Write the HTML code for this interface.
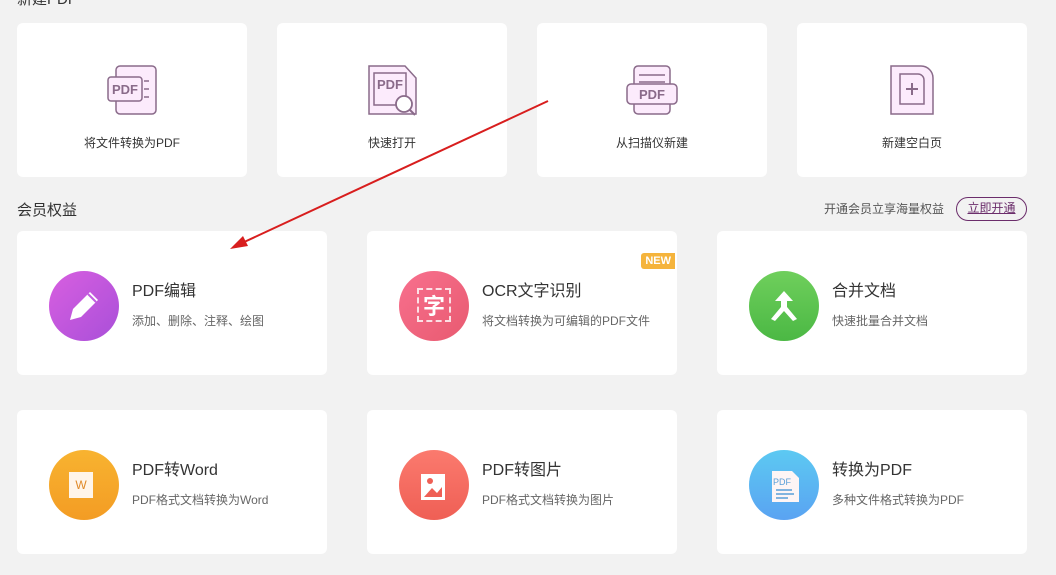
<!DOCTYPE html>
<html><head><meta charset="utf-8"><style>
*{margin:0;padding:0;box-sizing:border-box}
body{width:1056px;height:575px;background:#f2f2f2;font-family:"Liberation Sans","Noto Sans CJK SC",sans-serif;position:relative;overflow:hidden;color:#333}
.a{position:absolute}
.card{position:absolute;background:#fff;border-radius:6px}
.tc{text-align:center;font-size:12px;color:#333;position:absolute;left:0;right:0;top:111px}
.ic{position:absolute;left:50%;top:41px;margin-left:-26px}
.fc .c{position:absolute;left:32px;top:40px;width:70px;height:70px;border-radius:50%}
.fc .t{position:absolute;left:115px;top:46px;font-size:16px;color:#333}
.fc .s{position:absolute;left:115px;top:81px;font-size:12px;color:#666}
</style></head><body>
<div class="a" style="left:17px;top:-12px;font-size:15px;color:#333">新建PDF</div>

<div class="card" style="left:17px;top:23px;width:230px;height:154px">
<svg class="ic" width="52" height="52" viewBox="0 0 52 52"><rect x="10" y="2" width="40" height="48" rx="4" fill="#fcebfc" stroke="#8a6b8a" stroke-width="1.5"/><rect x="2" y="13" width="34" height="24" rx="3" fill="#fcebfc" stroke="#8a6b8a" stroke-width="1.5"/><text x="19" y="30" font-size="13" font-weight="bold" fill="#8a6b8a" text-anchor="middle" font-family="Liberation Sans">PDF</text><path d="M38 17h5M38 25h5M38 33h5" stroke="#8a6b8a" stroke-width="1.5"/></svg>
<div class="tc">将文件转换为PDF</div></div>

<div class="card" style="left:277px;top:23px;width:230px;height:154px">
<svg class="ic" width="52" height="52" viewBox="0 0 52 52"><path d="M3 2h36l11 12v36H3z" fill="#fcebfc" stroke="#8a6b8a" stroke-width="1.5"/><rect x="8" y="9" width="32" height="32" fill="none" stroke="#8a6b8a" stroke-width="1.5"/><text x="24" y="25" font-size="13" font-weight="bold" fill="#8a6b8a" text-anchor="middle" font-family="Liberation Sans">PDF</text><circle cx="38" cy="40" r="8" fill="#fff" stroke="#8a6b8a" stroke-width="1.8"/><path d="M44 46l5 5" stroke="#8a6b8a" stroke-width="2"/></svg>
<div class="tc">快速打开</div></div>

<div class="card" style="left:537px;top:23px;width:230px;height:154px">
<svg class="ic" width="52" height="52" viewBox="0 0 52 52"><rect x="8" y="2" width="36" height="48" rx="4" fill="#fcebfc" stroke="#8a6b8a" stroke-width="1.5"/><path d="M13 11h26M13 18h26" stroke="#8a6b8a" stroke-width="1.5"/><rect x="1" y="20" width="50" height="20" rx="4" fill="#fcebfc" stroke="#8a6b8a" stroke-width="1.5"/><text x="26" y="35" font-size="13" font-weight="bold" fill="#8a6b8a" text-anchor="middle" font-family="Liberation Sans">PDF</text></svg>
<div class="tc">从扫描仪新建</div></div>

<div class="card" style="left:797px;top:23px;width:230px;height:154px">
<svg class="ic" width="52" height="52" viewBox="0 0 52 52"><path d="M5 2h30a12 12 0 0 1 12 12v36H5z" fill="#fcebfc" stroke="#8a6b8a" stroke-width="1.5"/><path d="M14 10h18a6 6 0 0 1 6 6v24H14z" fill="none" stroke="#8a6b8a" stroke-width="1.5"/><path d="M26 19v12M20 25h12" stroke="#8a6b8a" stroke-width="2"/></svg>
<div class="tc">新建空白页</div></div>

<div class="a" style="left:17px;top:199px;font-size:15px;color:#333">会员权益</div>
<div class="a" style="left:824px;top:200px;font-size:12px;color:#555">开通会员立享海量权益</div>
<div class="a" style="left:956px;top:197px;width:71px;height:24px;border:1.5px solid #6b2d6b;border-radius:12px;font-size:12px;color:#6b2d6b;text-align:center;line-height:21px;text-decoration:underline">立即开通</div>

<div class="card fc" style="left:17px;top:231px;width:310px;height:144px">
<div class="c" style="background:linear-gradient(135deg,#d85fe0,#a94fd9)"></div>
<svg class="a" style="left:47px;top:55px" width="40" height="40" viewBox="0 0 40 40"><path d="M6 34l3-11 17-17 8 8-17 17z" fill="#fff"/><path d="M24 8l8 8" stroke="#c25ee0" stroke-width="2"/></svg>
<div class="t">PDF编辑</div><div class="s">添加、删除、注释、绘图</div></div>

<div class="card fc" style="left:367px;top:231px;width:310px;height:144px">
<div class="c" style="background:linear-gradient(135deg,#f8708e,#e85a70)"></div>
<div class="a" style="left:50px;top:57px;width:34px;height:34px;font-size:22px;color:#fff;font-weight:bold;text-align:center;line-height:34px;border:2px dashed rgba(255,255,255,.8)">字</div>
<div class="a" style="right:2px;top:22px;background:#f5b43c;color:#fff;font-size:11px;font-weight:bold;padding:2px 4px;border-radius:3px 0 0 3px">NEW</div>
<div class="t">OCR文字识别</div><div class="s">将文档转换为可编辑的PDF文件</div></div>

<div class="card fc" style="left:717px;top:231px;width:310px;height:144px">
<div class="c" style="background:linear-gradient(180deg,#6fcf5c,#4bb844)"></div>
<svg class="a" style="left:50px;top:58px" width="34" height="34" viewBox="0 0 34 34"><path d="M17 2l-9 10h6v6l-10 12 4 2 9-10 9 10 4-2-10-12v-6h6z" fill="#fff"/></svg>
<div class="t">合并文档</div><div class="s">快速批量合并文档</div></div>

<div class="card fc" style="left:17px;top:410px;width:310px;height:144px">
<div class="c" style="background:linear-gradient(180deg,#f8b330,#f39c24)"></div>
<div class="a" style="left:52px;top:62px;width:24px;height:26px;background:#fff5ea;color:#e08a2a;font-size:12px;text-align:center;line-height:26px">W</div>
<div class="t">PDF转Word</div><div class="s">PDF格式文档转换为Word</div></div>

<div class="card fc" style="left:367px;top:410px;width:310px;height:144px">
<div class="c" style="background:linear-gradient(180deg,#fb7a6e,#ef5f55)"></div>
<svg class="a" style="left:52px;top:58px" width="32" height="34" viewBox="0 0 32 34"><rect x="2" y="6" width="24" height="26" fill="#fff"/><path d="M5 29l8-9 5 5 5-6v10H5z" fill="#ef5f55"/><circle cx="11" cy="13" r="3" fill="#ef5f55"/></svg>
<div class="t">PDF转图片</div><div class="s">PDF格式文档转换为图片</div></div>

<div class="card fc" style="left:717px;top:410px;width:310px;height:144px">
<div class="c" style="background:linear-gradient(180deg,#5cc9f2,#5aa3f2)"></div>
<svg class="a" style="left:52px;top:58px" width="32" height="36" viewBox="0 0 32 36"><path d="M3 3h20l7 7v24H3z" fill="#fdf5f5"/><text x="13" y="17" font-size="9" fill="#5a9fd8" text-anchor="middle" font-family="Liberation Sans">PDF</text><path d="M7 22h16M7 26h18M7 30h12" stroke="#5a9fd8" stroke-width="1.5"/></svg>
<div class="t">转换为PDF</div><div class="s">多种文件格式转换为PDF</div></div>

<svg class="a" style="left:0;top:0" width="1056" height="575"><path d="M548 101L242 243" stroke="#d81e1e" stroke-width="2"/><path d="M230 249l13-13 5 10z" fill="#d81e1e"/></svg>
</body></html>
